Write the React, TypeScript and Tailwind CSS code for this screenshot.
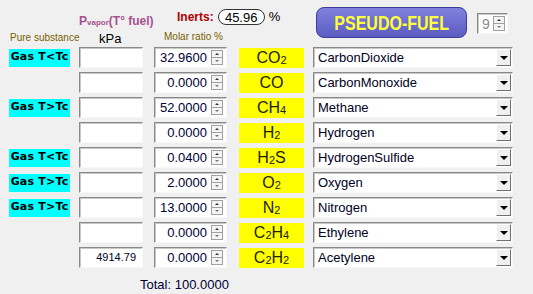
import type { ReactNode } from "react";

type Row = {
  state?: string;
  pvap?: string;
  ratio: string;
  formula: ReactNode;
  name: string;
};

const sub = (s: string) => <sub className="text-[11px] relative top-[1px] align-baseline">{s}</sub>;

const rows: Row[] = [
  { state: "Gas T<Tc", ratio: "32.9600", formula: <>CO{sub("2")}</>, name: "CarbonDioxide" },
  { ratio: "0.0000", formula: <>CO</>, name: "CarbonMonoxide" },
  { state: "Gas T>Tc", ratio: "52.0000", formula: <>CH{sub("4")}</>, name: "Methane" },
  { ratio: "0.0000", formula: <>H{sub("2")}</>, name: "Hydrogen" },
  { state: "Gas T<Tc", ratio: "0.0400", formula: <>H{sub("2")}S</>, name: "HydrogenSulfide" },
  { state: "Gas T>Tc", ratio: "2.0000", formula: <>O{sub("2")}</>, name: "Oxygen" },
  { state: "Gas T>Tc", ratio: "13.0000", formula: <>N{sub("2")}</>, name: "Nitrogen" },
  { ratio: "0.0000", formula: <>C{sub("2")}H{sub("4")}</>, name: "Ethylene" },
  { pvap: "4914.79", ratio: "0.0000", formula: <>C{sub("2")}H{sub("2")}</>, name: "Acetylene" },
];

const sunken =
  "border border-t-[#8a8a8a] border-l-[#8a8a8a] border-b-[#f8f8f8] border-r-[#f8f8f8] shadow-[inset_1px_1px_0_#c8c8c8] bg-white";

function SpinButtons() {
  return (
    <div className="flex flex-col w-[12px] h-[15px] border border-[#a0a0a0] bg-[#f4f4f4]">
      <div className="flex-1 flex items-center justify-center border-b border-[#a0a0a0]">
        <div className="w-0 h-0 border-l-[2px] border-r-[2px] border-b-[2px] border-l-transparent border-r-transparent border-b-[#333]" />
      </div>
      <div className="flex-1 flex items-center justify-center">
        <div className="w-0 h-0 border-l-[2px] border-r-[2px] border-t-[2px] border-l-transparent border-r-transparent border-t-[#777]" />
      </div>
    </div>
  );
}

function Select({ name }: { name: string }) {
  return (
    <div className={`${sunken} w-[200px] h-[21px] flex items-center`}>
      <span className="pl-[4px] flex-1 text-[13px] text-[#000022]">{name}</span>
      <div className="w-[15px] h-[17px] mr-[1px] bg-[#f0f0f0] border border-t-white border-l-white border-b-[#707070] border-r-[#707070] flex items-center justify-center">
        <div className="w-0 h-0 border-l-[4px] border-r-[4px] border-t-[4px] border-l-transparent border-r-transparent border-t-black" />
      </div>
    </div>
  );
}

export default function App() {
  return (
    <div
      className="w-[533px] h-[294px] bg-[#f0f0f0] overflow-hidden"
      style={{ fontFamily: '"Liberation Sans", Arial, sans-serif' }}
    >
      {/* header */}
      <div className="flex h-[47px]">
        <div className="ml-[10px] w-[69px] flex items-end pb-[4px]">
          <span className="text-[10px] text-[#7a6200] leading-none whitespace-nowrap">Pure substance</span>
        </div>
        <div className="w-[75px] flex flex-col pt-[15px]">
          <span className="text-[12px] font-bold text-[#a8508e] leading-none whitespace-nowrap">
            P<span className="text-[8px]">vapor</span>(T° fuel)
          </span>
          <span className="ml-[20px] mt-[5px] text-[13px] text-black leading-none">kPa</span>
        </div>
        <div className="w-[162px] flex flex-col">
          <div className="flex items-center mt-[9px] ml-[23px] h-[16px]">
            <span className="text-[12px] font-bold text-[#b00000]">Inerts:</span>
            <div className="ml-[4px] w-[47px] h-[16px] rounded-full border-[1.5px] border-[#333] bg-white flex items-center justify-center text-[13px] text-black leading-none">
              45.96
            </div>
            <span className="ml-[4px] text-[13px] text-black">%</span>
          </div>
          <span className="ml-[10px] mt-[7px] text-[10px] text-[#7a6200] leading-none">Molar ratio %</span>
        </div>
        <div className="mt-[7px] w-[151px] h-[31px] rounded-[8px] border border-[#3c3c9a] bg-gradient-to-b from-[#8080dc] to-[#5c5cc2] flex items-center justify-center">
          <span className="inline-block text-[20px] font-bold text-[#ffff3a] leading-none scale-x-[0.8] whitespace-nowrap">
            PSEUDO-FUEL
          </span>
        </div>
        <div className={`ml-[10px] mt-[13px] w-[31px] h-[21px] ${sunken} flex items-center`}>
          <span className="flex-1 pl-[4px] text-[14px] text-[#8a8a8a] leading-none">9</span>
          <div className="mr-[2px]">
            <SpinButtons />
          </div>
        </div>
      </div>

      {/* rows */}
      <div className="flex flex-col gap-[4px]">
        {rows.map((r, i) => (
          <div key={i} className="flex items-center h-[21px]">
            <div className="ml-[9px] w-[61px] h-[18px] flex items-center justify-center">
              {r.state && (
                <div
                  className="w-full h-full bg-[#00ffff] flex items-center justify-center text-[11px] font-bold text-black tracking-[0.2px]"
                  style={{ fontFamily: '"DejaVu Sans", Verdana, sans-serif' }}
                >
                  {r.state}
                </div>
              )}
            </div>
            <div className={`ml-[9px] w-[64px] h-[21px] ${sunken} flex items-center justify-end pr-[6px] text-[11px] text-[#000022]`}>
              {r.pvap}
            </div>
            <div className={`ml-[11px] w-[73px] h-[21px] ${sunken} flex items-center`}>
              <span className="flex-1 text-right pr-[4px] text-[13px] text-[#000033]">{r.ratio}</span>
              <div className="mr-[3px]">
                <SpinButtons />
              </div>
            </div>
            <div className="ml-[12px] w-[65px] h-[20px] bg-[#ffff00] flex items-center justify-center text-[16px] text-[#222200] leading-none">
              <span>{r.formula}</span>
            </div>
            <div className="ml-[9px]">
              <Select name={r.name} />
            </div>
          </div>
        ))}
      </div>

      <div className="mt-[7px] ml-[140px] text-[13px] text-[#000033]">Total: 100.0000</div>
    </div>
  );
}
